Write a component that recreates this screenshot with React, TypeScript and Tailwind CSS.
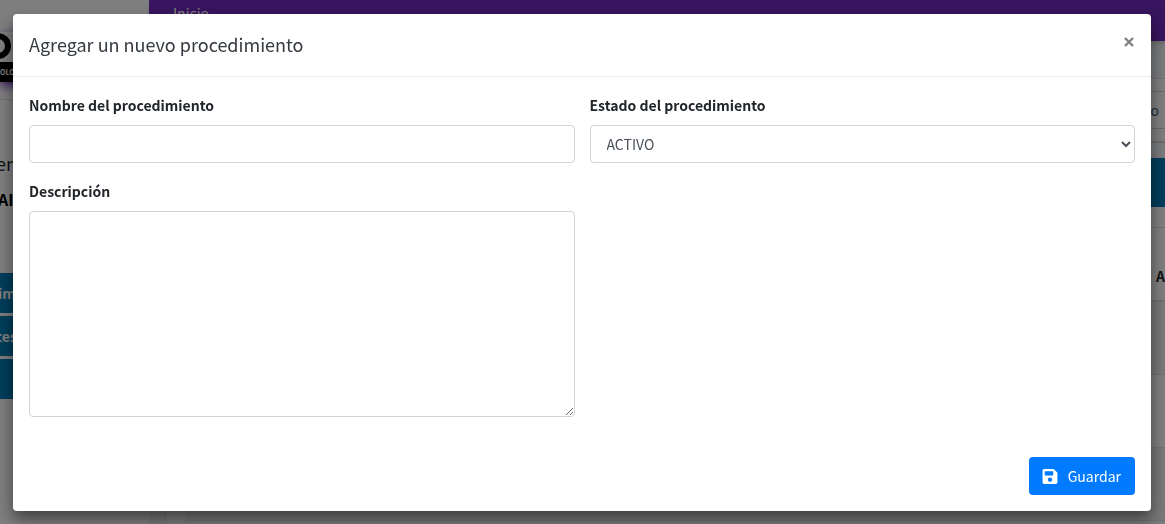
import React from "react";

const control =
  "block w-full rounded border border-[#ced4da] bg-white text-sm text-[#495057] outline-none focus:border-[#80bdff]";

function SaveIcon() {
  return (
    <svg viewBox="0 0 448 512" className="h-[17px] w-4" fill="currentColor" aria-hidden="true">
      <path d="M433.941 129.941l-83.882-83.882A48 48 0 0 0 316.118 32H48C21.49 32 0 53.49 0 80v352c0 26.51 21.49 48 48 48h352c26.51 0 48-21.49 48-48V163.882a48 48 0 0 0-14.059-33.941zM224 416c-35.346 0-64-28.654-64-64 0-35.346 28.654-64 64-64s64 28.654 64 64c0 35.346-28.654 64-64 64zm96-304.52V212c0 6.627-5.373 12-12 12H76c-6.627 0-12-5.373-12-12V108c0-6.627 5.373-12 12-12h228.52c3.183 0 6.235 1.264 8.485 3.515l3.48 3.48A11.996 11.996 0 0 1 320 111.48z" />
    </svg>
  );
}

function Sidebar() {
  return (
    <aside className="w-[149px] shrink-0 overflow-hidden bg-white">
      <div className="h-[100px] border-b border-[#dee2e6] pt-8">
        <div className="w-10 shadow-[0_4px_10px_#6f2cbc]">
          <svg viewBox="0 0 40 30" className="block h-[30px] w-10" aria-hidden="true">
            <ellipse cx="-2" cy="14" rx="10" ry="10" fill="none" stroke="#000" strokeWidth="6" />
          </svg>
          <div className="h-5 bg-black text-[7px] leading-5 font-bold text-white">OLOGÍA</div>
        </div>
      </div>
      <div className="-ml-1 pt-[51px]">
        <p className="text-lg leading-6 text-[#212529]">en</p>
      </div>
      <p className="-ml-0.5 pt-3 text-base leading-6 font-bold text-black">AI</p>
      <nav className="mt-[62px] flex flex-col gap-[3px] text-sm font-bold text-white">
        <a href="#im" className="h-10 bg-[#007bb6] leading-10 -indent-0.5">im</a>
        <a href="#tes" className="h-10 bg-[#007bb6] leading-10 -indent-1">tes</a>
        <a href="#mas" aria-label="Más" className="h-10 bg-[#007bb6]" />
      </nav>
    </aside>
  );
}

function Page() {
  return (
    <div className="flex h-screen overflow-hidden bg-[#f4f6f9]" aria-hidden="true">
      <Sidebar />
      <div className="min-w-0 flex-1">
        <header className="relative h-[41px] bg-[#702bbd] pl-6 text-sm leading-[26px] text-white shadow-md">
          Inicio
        </header>
        <div className="mt-[37px] ml-4 border-t border-l border-[#dee2e6] bg-white">
          <div className="pt-3">
            <div className="h-[38px] border-y border-[#ced4da] pr-1.5 text-right text-sm leading-9 text-[#495057]">
              o
            </div>
          </div>
          <div className="mt-3 h-[17px] border-t-2 border-[#d3d6da] bg-[#f4f6f9]" />
          <div className="h-[49px] bg-[#007bb6]" />
          <div className="mt-5 ml-5 border-t border-[#dee2e6]">
            <div className="h-[74px] overflow-hidden border-b-2 border-[#dee2e6] pt-9 text-right text-sm leading-6 font-bold text-[#212529]">
              A
            </div>
            <div className="h-[73px] border-b border-[#dee2e6] bg-[#f2f2f2]" />
            <div className="h-[73px] border-b border-[#dee2e6]" />
            <div className="h-[73px] border-b border-[#dee2e6] bg-[#f2f2f2]" />
          </div>
        </div>
      </div>
    </div>
  );
}

export default function App() {
  return (
    <div className="font-['Noto_Sans_CJK_SC','Noto_Sans',sans-serif]">
      <Page />
      <div className="fixed inset-0 overflow-auto bg-black/50 px-[13px] py-3.5 pr-3.5">
        <div
          role="dialog"
          aria-modal="true"
          aria-labelledby="dialog-title"
          className="rounded bg-white text-[#212529] shadow-[0_8px_16px_rgba(0,0,0,0.5)]"
        >
          <header className="flex items-start justify-between border-b border-[#e9ecef] p-4">
            <h5 id="dialog-title" className="mb-0.5 text-lg leading-7 text-[#343a40]">
              Agregar un nuevo procedimiento
            </h5>
            <button
              type="button"
              aria-label="Cerrar"
              className="flex h-6 w-3 items-center justify-center text-[#7f7f7f]"
            >
              <svg viewBox="0 0 10 10" className="h-2.5 w-2.5" aria-hidden="true">
                <path d="M1 1l8 8M9 1L1 9" stroke="currentColor" strokeWidth="2.4" />
              </svg>
            </button>
          </header>
          <form className="p-4" onSubmit={(e) => e.preventDefault()}>
            <div className="grid grid-cols-2 gap-x-[15px] gap-y-4">
              <div>
                <label htmlFor="nombre" className="mb-2 block text-sm leading-6 font-bold">
                  Nombre del procedimiento
                </label>
                <input id="nombre" type="text" className={`${control} h-[38px] px-3`} />
              </div>
              <div>
                <label htmlFor="estado" className="mb-2 block text-sm leading-6 font-bold">
                  Estado del procedimiento
                </label>
                <select id="estado" defaultValue="ACTIVO" className={`${control} h-[38px] pl-3`}>
                  <option>ACTIVO</option>
                  <option>INACTIVO</option>
                </select>
              </div>
              <div>
                <label htmlFor="descripcion" className="mb-2 block text-sm leading-6 font-bold">
                  Descripción
                </label>
                <textarea id="descripcion" className={`${control} h-[206px] px-3 py-1.5`} />
              </div>
            </div>
            <div className="mt-10 flex justify-end">
              <button
                type="submit"
                className="flex h-[38px] items-center gap-2.5 rounded bg-[#007bff] pr-3.5 pl-[13px] text-sm text-white"
              >
                <SaveIcon />
                Guardar
              </button>
            </div>
          </form>
        </div>
      </div>
    </div>
  );
}
